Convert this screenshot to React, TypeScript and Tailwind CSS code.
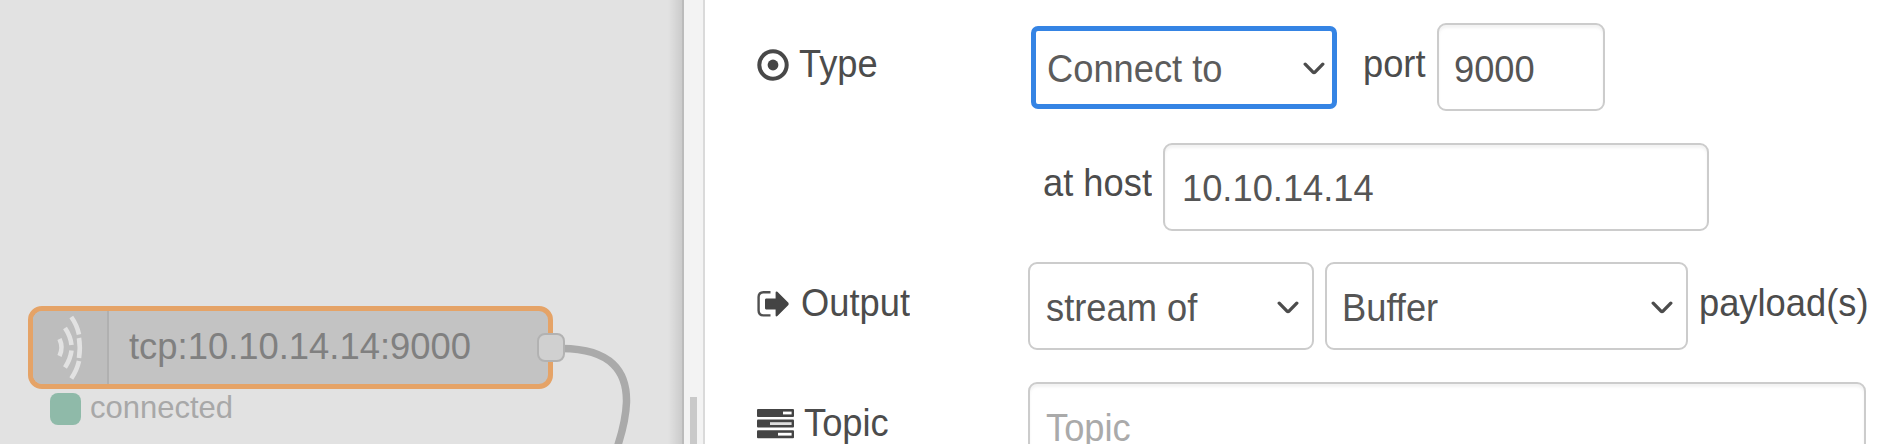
import React from 'react';

function Chevron() {
  return (
    <svg className="shrink-0 mb-[2px]" width="22" height="14" viewBox="0 0 22 14" fill="none" stroke="#4c4c4c" strokeWidth="3.3" strokeLinecap="round" strokeLinejoin="round">
      <path d="M2.2 2.2 L10 10.2 Q11 11 12 10.2 L19.8 2.2" />
    </svg>
  );
}

function DotCircleIcon() {
  return (
    <svg width="32" height="32" viewBox="0 0 32 32">
      <circle cx="16" cy="16" r="13.7" fill="none" stroke="#484848" strokeWidth="4" />
      <circle cx="16" cy="16" r="5.4" fill="#444" />
    </svg>
  );
}

function SignOutIcon() {
  return (
    <svg width="32" height="28" viewBox="0 0 32 28">
      <path d="M13.500 2.2 H6.5 Q1.6 2.2 1.6 7 V20.5 Q1.6 25.4 6.5 25.4 H13.500" fill="none" stroke="#505050" strokeWidth="2.4" />
      <path d="M9 8.6 H18.6 V2.4 Q18.8 .8 20.4 1.8 L31.4 12.8 Q32 14 31.4 15 L20.4 26 Q18.8 27 18.6 25.4 V19.4 H9 Q8 19.2 8 18.2 V9.8 Q8 8.8 9 8.6 Z" fill="#444" />
    </svg>
  );
}

function TasksIcon() {
  return (
    <svg width="37" height="30" viewBox="0 0 37 30">
      <g fill="#444">
        <rect x="0" y="0" width="37" height="8" rx="1" />
        <rect x="0" y="10.6" width="37" height="8" rx="1" />
        <rect x="0" y="21.2" width="37" height="8" rx="1" />
      </g>
      <g fill="#fff">
        <rect x="26" y="2.6" width="8.6" height="2.8" />
        <rect x="13" y="13.2" width="21.6" height="2.8" fill="#ddd" />
        <rect x="21" y="23.8" width="13.6" height="2.8" />
      </g>
    </svg>
  );
}

function Label({ icon, children, className }: { icon: React.ReactNode; children: React.ReactNode; className: string }) {
  return (
    <div className={`flex items-center shrink-0 pb-[5px] ${className}`}>
      {icon}
      <span className="origin-[50%_85%] scale-y-[1.050]">{children}</span>
    </div>
  );
}

function SelectText({ children }: { children: React.ReactNode }) {
  return <span className="origin-[50%_85%] scale-y-[1.090]">{children}</span>;
}

const field = 'flex h-[88px] shrink-0 items-center rounded-[9px] border-2 border-[#ccc] bg-white text-[#555] pt-[5px]';
const input = 'shadow-[inset_0_3px_3px_rgba(0,0,0,0.05)]';

function FlowCanvas() {
  return (
    <section className="relative h-full w-[682px] shrink-0 overflow-hidden bg-[#e2e2e2]">
      <svg className="absolute left-0 top-0" width="682" height="444" fill="none">
        <path d="M562 348.5 C612 349 627 372 626.5 402 C626 417 623 430 617 448" stroke="#aaa" strokeWidth="7.5" />
      </svg>
      <div className="absolute left-[28px] top-[306px] flex h-[83px] w-[525px] items-center overflow-hidden rounded-[14px] border-5 border-[#e5a367] bg-[#c3c3c3]">
        <div className="flex h-full w-[76px] shrink-0 items-center border-r-2 border-[#b0b0b0] bg-[#bdbdbd]">
          <svg width="74" height="73" viewBox="33 311 74 73" fill="none" stroke="#e2e2e2" strokeWidth="4.6">
            <path d="M59.500 339 Q63.500 347.500 59.500 356" />
            <path d="M65 328 Q70.500 336 71.500 345 M71.500 350.500 Q70.500 359 65 367.500" />
            <path d="M71.300 317 Q77 325 79 334.500 M79 338 Q80.600 347.500 79 358 M79 361 Q77 370 71.300 378.500" />
          </svg>
        </div>
        <span className="origin-[50%_85%] scale-y-[1.030] pl-[20px] text-[36.400px] leading-none text-[#808080]">tcp:10.10.14.14:9000</span>
      </div>
      <div className="absolute left-[537px] top-[333px] h-[29px] w-[28px] rounded-[8px] border-2 border-[#b2b2b2] bg-[#d0d0d0]" />
      <div className="absolute left-[50px] top-[393px] flex h-[32px] items-center gap-[9px]">
        <span className="h-[32px] w-[31px] rounded-[8px] bg-[#8fbaa9]" />
        <span className="origin-[50%_85%] scale-y-[1.040] pb-[3px] text-[31px] leading-none text-[#a8a8a8]">connected</span>
      </div>
      <div className="absolute right-0 top-0 h-full w-[14px] bg-linear-to-r from-transparent to-black/10" />
    </section>
  );
}

export default function App() {
  return (
    <main className="flex h-[444px] w-[1880px] overflow-hidden bg-white font-['Liberation_Sans',Arial,sans-serif] text-[36.300px] leading-[36px] whitespace-nowrap text-[#4c4c4c]">
      <FlowCanvas />
      <div className="flex h-full w-[23px] shrink-0 items-end border-l-2 border-r-2 border-l-[#bbb] border-r-[#dadada] bg-[#f3f3f3] pl-[6px]">
        <div className="h-[47px] w-[7px] bg-[#c9c9c9]" />
      </div>
      <form className="flex grow flex-col gap-[31.700px] pl-[52px] pt-[23px]">
        <div className="flex h-[88px] shrink-0 items-center">
          <Label icon={<DotCircleIcon />} className="w-[274px] gap-[10px]">Type</Label>
          <div className="mr-[1px] flex h-[83px] w-[306px] shrink-0 items-center justify-between rounded-[7px] border-5 border-[#3584e4] bg-white pl-[11px] pr-[7px] pt-[5px] text-[#5c5c5c]">
            <SelectText>Connect to</SelectText>
            <Chevron />
          </div>
          <span className="w-[99px] shrink-0 origin-[50%_75%] scale-y-[1.050] pb-[5px] pl-[25px]">port</span>
          <div className={`${field} ${input} w-[168px] pl-[15px]`}>
            <span className="origin-[50%_85%] scale-y-[1.030]">9000</span>
          </div>
        </div>
        <div className="flex h-[88px] shrink-0 items-center pl-[286px]">
          <span className="w-[120px] shrink-0 origin-[50%_75%] scale-y-[1.050] pb-[5px]">at host</span>
          <div className={`${field} ${input} w-[546px] pl-[17px]`}>
            <span className="origin-[50%_85%] scale-y-[1.030]">10.10.14.14</span>
          </div>
        </div>
        <div className="flex h-[88px] shrink-0 items-center">
          <Label icon={<SignOutIcon />} className="w-[271px] gap-[12px]">Output</Label>
          <div className={`${field} w-[286px] justify-between pl-[16px] pr-[13px]`}>
            <SelectText>stream of</SelectText>
            <Chevron />
          </div>
          <div className={`${field} ml-[11px] w-[363px] justify-between pl-[15px] pr-[13px]`}>
            <SelectText>Buffer</SelectText>
            <Chevron />
          </div>
          <span className="origin-[50%_75%] scale-y-[1.050] pb-[5px] pl-[11px]">payload(s)</span>
        </div>
        <div className="flex h-[88px] shrink-0 items-center">
          <Label icon={<TasksIcon />} className="w-[271px] gap-[10px]">Topic</Label>
          <div className={`${field} ${input} w-[838px] pl-[16px] text-[#aaa]`}>
            <SelectText>Topic</SelectText>
          </div>
        </div>
      </form>
    </main>
  );
}
